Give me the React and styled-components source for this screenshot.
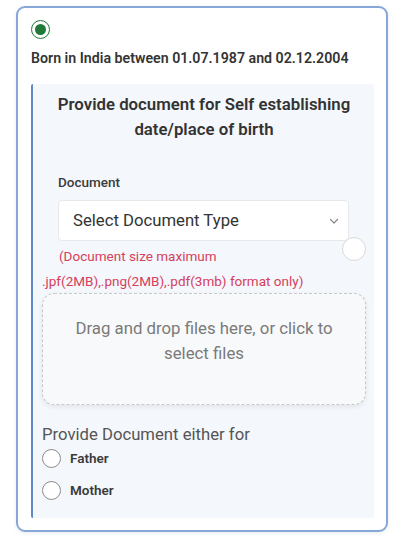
import React from "react";
import styled, { createGlobalStyle } from "styled-components";

const Global = createGlobalStyle`
  html, body { margin: 0; padding: 0; background: #ffffff; }
  body { font-family: Roboto, "Noto Sans", Arial, sans-serif; }
  * { box-sizing: border-box; }
`;

const Page = styled.div`
  width: 400px;
  height: 540px;
  padding: 6px 12px 8px 16px;
`;

const Card = styled.div`
  width: 372px;
  height: 526px;
  border: 2px solid #87a7d8;
  border-radius: 9px;
  background: #fff;
  box-shadow: 0 1px 4px rgba(60, 90, 140, 0.12);
  padding: 12px 12px 12px 13px;
  display: flex;
  flex-direction: column;
`;

const Radio = styled.span`
  display: inline-flex;
  align-items: center;
  justify-content: center;
  width: ${(p) => p.size}px;
  height: ${(p) => p.size}px;
  border-radius: 50%;
  border: 1.5px solid ${(p) => (p.checked ? "#1f7a3c" : "#8a8a8a")};
  background: #fff;
  flex: none;
  &::after {
    content: "";
    display: ${(p) => (p.checked ? "block" : "none")};
    width: 11px;
    height: 11px;
    border-radius: 50%;
    background: #1f7a3c;
  }
`;

const TopRadio = styled.div`
  height: 19px;
  display: flex;
`;

const Born = styled.div`
  margin-top: 10px;
  font-size: 14.2px;
  font-weight: 600;
  color: #333;
  line-height: 18px;
`;

const Panel = styled.div`
  margin-top: 17px;
  flex: 1;
  background: #f4f7fb;
  border-left: 2.5px solid #5f88c6;
  border-radius: 2px;
  padding: 8px 8px 0 9px;
  display: flex;
  flex-direction: column;
`;

const Title = styled.div`
  text-align: center;
  font-size: 16.8px;
  font-weight: 600;
  color: #333;
  line-height: 25px;
  padding: 0 10px;
`;

const Field = styled.div`
  position: relative;
  margin-top: 31px;
  padding: 0 17px 0 16px;
`;

const Label = styled.div`
  font-size: 13.5px;
  font-weight: 500;
  color: #3c3c3c;
  line-height: 18px;
`;

const Select = styled.div`
  margin-top: 9px;
  height: 41px;
  background: #fff;
  border: 1px solid #e6e8ec;
  border-radius: 4px;
  display: flex;
  align-items: center;
  justify-content: space-between;
  padding: 0 8px 0 14px;
  font-size: 16.7px;
  color: #333;
`;

const Ghost = styled.span`
  position: absolute;
  right: 0;
  top: 64px;
  width: 24px;
  height: 24px;
  border-radius: 50%;
  border: 1.5px solid #d9d9d9;
  background: #fff;
`;

const Warn = styled.div`
  color: #d6405c;
  font-size: 13.5px;
  line-height: 18px;
  white-space: nowrap;
  margin-top: ${(p) => p.mt}px;
  padding-left: ${(p) => p.pl}px;
`;

const Drop = styled.div`
  margin-top: 3px;
  height: 112px;
  border: 1.5px dashed #c8c8c8;
  border-radius: 12px;
  background: #f8f9fa;
  box-shadow: 0 2px 5px rgba(0, 0, 0, 0.08);
  display: flex;
  justify-content: center;
  padding: 22px 24px 0;
  text-align: center;
  font-size: 16.8px;
  line-height: 25px;
  color: #7a7a7a;
`;

const Either = styled.div`
  margin-top: 20px;
  font-size: 16.7px;
  line-height: 20px;
  color: #555;
`;

const Option = styled.label`
  display: flex;
  align-items: center;
  gap: 9px;
  height: 20px;
  margin-top: ${(p) => p.mt}px;
  font-size: 13.5px;
  font-weight: 600;
  color: #3a3a3a;
`;

const Chevron = () => (
  <svg width="12" height="12" viewBox="0 0 12 12" fill="none">
    <path d="M2.5 4.5 L6 8 L9.5 4.5" stroke="#888" strokeWidth="1.2" strokeLinecap="round" strokeLinejoin="round" />
  </svg>
);

export default function App() {
  return (
    <Page>
      <Global />
      <Card>
        <TopRadio>
          <Radio checked size={19} />
        </TopRadio>
        <Born>Born in India between 01.07.1987 and 02.12.2004</Born>
        <Panel>
          <Title>Provide document for Self establishing date/place of birth</Title>
          <Field>
            <Label>Document</Label>
            <Select>
              <span>Select Document Type</span>
              <Chevron />
            </Select>
            <Ghost />
            <Warn mt={6} pl={1}>(Document size maximum</Warn>
          </Field>
          <Warn mt={7} pl={0}>.jpf(2MB),.png(2MB),.pdf(3mb) format only)</Warn>
          <Drop>Drag and drop files here, or click to select files</Drop>
          <Either>Provide Document either for</Either>
          <Option mt={3}>
            <Radio size={19} />
            Father
          </Option>
          <Option mt={12}>
            <Radio size={19} />
            Mother
          </Option>
        </Panel>
      </Card>
    </Page>
  );
}
